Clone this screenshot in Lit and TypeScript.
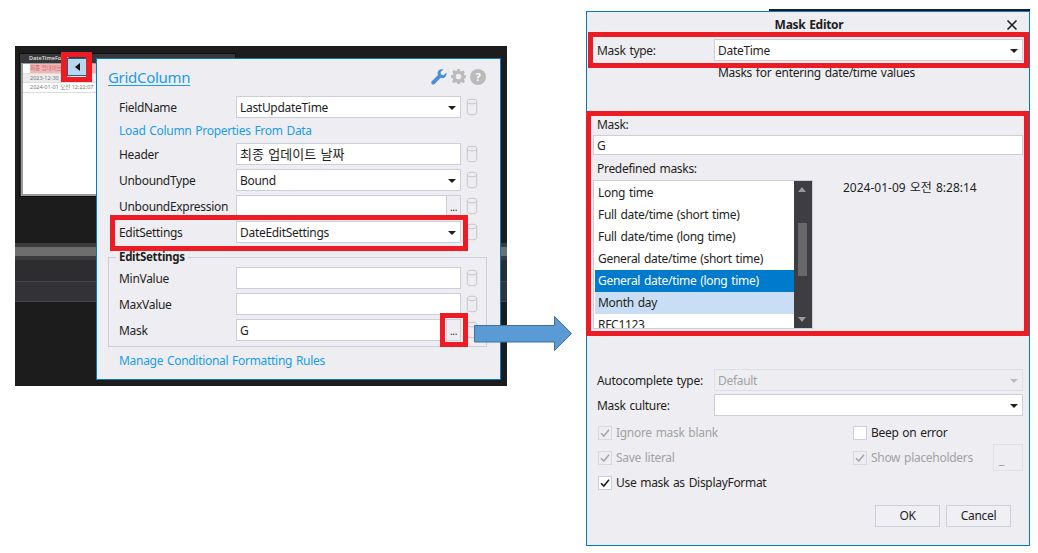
import { LitElement, html, css, svg } from "lit";
import { customElement } from "lit/decorators.js";

const caret = html`<span class="caret"></span>`;
const cyl = svg`<svg class="cyl" width="12" height="18" viewBox="0 0 12 18" fill="none" stroke="#c6c6ca" stroke-width="1"><ellipse cx="6" cy="3.5" rx="4.7" ry="2.3"/><path d="M1.3 3.5V14.5C1.3 16 3.5 16.8 6 16.8S10.7 16 10.7 14.5V3.5"/></svg>`;
const checkMark = (c: string) => svg`<svg width="12" height="12" viewBox="0 0 12 12" fill="none" stroke="${c}" stroke-width="1.6"><path d="M2 6.2 4.8 9 10 2.8"/></svg>`;

@customElement("app-root")
export class AppRoot extends LitElement {
  static styles = css`
    :host { display: block; position: relative; width: 1038px; height: 553px; background: #fff; overflow: hidden;
      font: 12px "Noto Sans", "Noto Sans CJK KR", sans-serif; color: #1e1e1e; letter-spacing: -0.3px; word-spacing: 1px; }
    * { box-sizing: border-box; }

    /* left capture */
    .shot { position: absolute; left: 15px; top: 46px; width: 492px; height: 340px; background: #1c1c1c; }
    .inner { position: absolute; left: 4px; top: 7px; width: 217px; height: 144px; background: #38383b; border: 1px solid #0e0e0e; display: flex; flex-direction: column; }
    .inner-head { height: 9px; font-size: 5.500px; line-height: 9px; color: #ddd; padding-left: 9px; font-weight: 600; letter-spacing: 0; }
    .inner-grid { flex: 1; margin: 0 1px 0 1px; background: #fff; border: 2px solid #9a9a9a; border-top-width: 1px; width: 90px; font-size: 5.500px; color: #777; letter-spacing: 0; word-spacing: 0; }
    .inner-row { height: 9.500px; line-height: 9px; padding-left: 7px; border-bottom: 1px solid #ddd; white-space: nowrap; overflow: hidden; }
    .inner-row.pink { background: linear-gradient(90deg, #fff 7px, #f7b4b4 7px); color: #b06a6a; }
    .inner-row.cur { background: #ececec; }
    .stripes { position: absolute; left: 0; right: 0; top: 197px; display: flex; flex-direction: column; }
    .s1 { height: 4px; background: #3c3c3c; }
    .s2 { height: 9px; background: #6e6e6e; }
    .s3 { height: 4px; background: #3c3c3c; }
    .s4 { height: 22px; background: #2d2d30; border-bottom: 1px solid #454548; }
    .s5 { height: 20px; background: #333337; border-bottom: 1px solid #454548; }

    .collapse { position: absolute; left: 67px; top: 58px; width: 20px; height: 18px; background: #b7d9ef; border: 1px solid #2a5e82; display: flex; align-items: center; justify-content: center; }
    .tri { width: 0; height: 0; border-top: 4px solid transparent; border-bottom: 4px solid transparent; border-right: 5px solid #111; }

    /* property panel */
    .panel { position: absolute; left: 96px; top: 58px; width: 405px; height: 322px; background: #eeeef2; border: 1px solid #0079cb; padding: 0 0 0 11px; display: flex; flex-direction: column; }
    .head { height: 37px; display: flex; align-items: center; padding-right: 14px; }
    .title { font-size: 15px; color: #1a9cf0; text-decoration: underline; text-underline-offset: 2px; padding-bottom: 2px; }
    .tools { margin-left: auto; display: flex; align-items: center; gap: 4px; padding-bottom: 2px; }
    .rows { display: flex; flex-direction: column; gap: 4px; padding-left: 11px; }
    .row { display: grid; grid-template-columns: 117px 225px 16px; align-items: center; height: 22px; }
    .row .cyl { margin-left: 5px; }
    .link { color: #1a9cf0; height: 19px; line-height: 22px; margin: -2px 0 0; }
    .field { height: 22px; background: #fff; border: 1px solid #cccedb; padding: 1px 3px 0; line-height: 19px; display: flex; align-items: center; }
    .field .val { flex: 1; white-space: nowrap; overflow: hidden; }
    .ko { font-size: 13px; letter-spacing: 0; }
    .caret { width: 0; height: 0; border-left: 4.500px solid transparent; border-right: 4.500px solid transparent; border-top: 4.500px solid #1e1e1e; margin-right: 1px; }
    .dots { width: 14px; height: 20px; border-left: 1px solid #cccedb; background: #eeeef2; margin-right: -3px; margin-top: -1px; font-size: 10px; line-height: 22px; text-align: center; }
    .group { position: relative; margin: 10px 14px 0 -11px; width: 379px; height: 90px; border: 1px solid #cccedb; padding: 9px 0 0 10px; display: flex; flex-direction: column; gap: 4px; }
    .legend { position: absolute; left: 7px; top: -9px; background: #eeeef2; padding: 0 3px; font-size: 11.500px; font-weight: 700; line-height: 16px; }
    .manage { color: #1a9cf0; height: 18px; line-height: 20px; }

    /* arrow */
    .arrow { position: absolute; left: 473px; top: 315px; }

    /* dialog */
    .edge { position: absolute; left: 769px; top: 9px; width: 261px; height: 2px; background: #1c1c1c; }
    .dialog { position: absolute; left: 586px; top: 11px; width: 444px; height: 535px; background: #eeeef2; border: 1px solid #0079cb; padding: 0 6px 0 10px; display: flex; flex-direction: column; }
    .dtitle { height: 25px; margin: 0 -6px 2px -10px; padding-left: 2px; display: flex; align-items: center; justify-content: center; font-weight: 700; position: relative; }
    .close { position: absolute; right: 11px; top: 7px; }
    .drow { display: grid; grid-template-columns: 117px 1fr; align-items: center; height: 22px; }
    .desc { margin-left: 121px; height: 22px; line-height: 24px; }
    .dmask { margin-top: 33px; height: 19px; line-height: 18px; }
    .mask-in { margin-left: -4px; height: 20px; background: #fff; border: 1px solid #cccedb; padding-left: 3px; line-height: 20px; }
    .plabel { margin-top: 4px; height: 21px; line-height: 20px; }
    .listwrap { display: flex; align-items: flex-start; margin-left: -4px; height: 149px; }
    .list { width: 220px; height: 149px; border: 1px solid #cccedb; background: #fff; display: flex; overflow: hidden; }
    .items { flex: 1; padding: 1px 0 0 1px; overflow: hidden; }
    .item { height: 22px; line-height: 22px; padding-left: 3px; white-space: nowrap; }
    .item.sel { background: #007acc; color: #fff; }
    .item.hov { background: #c9def5; }
    .sb { width: 18px; background: #3e3e42; position: relative; }
    .up, .dn { position: absolute; left: 4px; width: 0; height: 0; border-left: 4.500px solid transparent; border-right: 4.500px solid transparent; }
    .up { top: 6px; border-bottom: 5px solid #999; }
    .dn { bottom: 6px; border-top: 5px solid #999; }
    .thumb { position: absolute; left: 4px; top: 42px; width: 9px; height: 53px; background: #686868; }
    .sample { margin-left: 30px; line-height: 16px; white-space: nowrap; letter-spacing: 0; }
    .auto { margin-top: 40px; }
    .culture { margin-top: 3px; }
    .dis { background: #eeeef2; border-color: #dedee6; color: #a2a2a2; }
    .dis .caret { border-top-color: #bbb; }
    .checks { margin-top: 4px; display: grid; grid-template-columns: 255px 1fr; grid-auto-rows: 25px; }
    .chk { display: flex; align-items: center; gap: 4px; margin-left: 1px; white-space: nowrap; }
    .chk.off { color: #a2a2a2; }
    .box { width: 14px; height: 14px; background: #fff; border: 1px solid #cccedb; display: flex; align-items: center; justify-content: center; }
    .off .box { background: #eeeef2; border-color: #d8d8e0; }
    .ph { margin-left: auto; width: 30px; height: 27px; border: 1px solid #e0e0e8; color: #999; padding: 8px 0 0 5px; line-height: 14px; }
    .btns { margin-top: 10px; display: flex; justify-content: flex-end; gap: 6px; padding-right: 12px; }
    .btn { width: 65px; height: 22px; border: 1px solid #cccedb; background: #f0f0f4; text-align: center; line-height: 20px; }

    /* callouts */
    .red { position: absolute; border: 5px solid #ed1c24; pointer-events: none; }
    .r1 { left: 61px; top: 52px; width: 31px; height: 30px; border-width: 5px 6px; }
    .r2 { left: 110px; top: 215px; width: 358px; height: 36px; }
    .r3 { left: 440px; top: 313px; width: 28px; height: 34px; }
    .r4 { left: 588px; top: 32px; width: 441px; height: 36px; }
    .r5 { left: 586px; top: 111px; width: 443px; height: 225px; }
  `;

  private row(label: string, value: unknown, kind: "select" | "text" | "dots" = "text") {
    return html`<div class="row"><span>${label}</span>
      <div class="field"><span class="val">${value}</span>${kind === "select" ? caret : kind === "dots" ? html`<span class="dots">...</span>` : ""}</div>
      ${cyl}</div>`;
  }

  render() {
    const items = ["Long time", "Full date/time (short time)", "Full date/time (long time)", "General date/time (short time)"];
    return html`
      <div class="shot">
        <div class="inner">
          <div class="inner-head">DateTimeForm</div>
          <div class="inner-grid">
            <div class="inner-row pink">최종 업데이트</div>
            <div class="inner-row cur">2023-12-30 오전</div>
            <div class="inner-row">2024-01-01 오전 12:22:07</div>
          </div>
        </div>
        <div class="stripes"><div class="s1"></div><div class="s2"></div><div class="s3"></div><div class="s4"></div><div class="s5"></div></div>
      </div>
      <div class="collapse"><span class="tri"></span></div>

      <div class="panel">
        <div class="head">
          <span class="title">GridColumn</span>
          <div class="tools">
            <svg width="16" height="16" viewBox="0 0 16 16"><path fill="#4a8fd6" d="M15.400 3.600 12.600 6.200 10 5.600 9.600 3 12.400.4C10.400-.2 8.200.4 7.200 2 6.400 3.200 6.400 4.800 7 6L.8 12.200C0 13 0 14.200.8 15s2 .8 2.800 0L9.800 8.800c1.400.6 3 .4 4.200-.6 1.200-1.200 1.800-3 1.400-4.600Z"/></svg>
            <svg width="15" height="15" viewBox="0 0 16 16"><path fill="#bbb" fill-rule="evenodd" d="M6.600 0h2.800l.4 2.200 1.200.5L12.900 1.400l2 2-1.300 1.900.5 1.200 2.200.4v2.800l-2.200.4-.5 1.200 1.300 1.900-2 2-1.900-1.300-1.200.5-.4 2.200H6.600l-.4-2.200-1.200-.5-1.900 1.300-2-2 1.300-1.900-.5-1.200L-.1 9.400V6.600l2.200-.4.5-1.200L1.300 3.100l2-2 1.900 1.300 1.200-.5ZM8 5a3 3 0 1 0 0 6 3 3 0 0 0 0-6Z"/></svg>
            <svg width="16" height="16" viewBox="0 0 16 16"><circle cx="8" cy="8" r="8" fill="#bbb"/><text x="8" y="12" text-anchor="middle" font-size="11" font-weight="700" fill="#fff" font-family="Noto Sans">?</text></svg>
          </div>
        </div>
        <div class="rows">
          ${this.row("FieldName", "LastUpdateTime", "select")}
          <div class="link">Load Column Properties From Data</div>
          ${this.row("Header", html`<span class="ko">최종 업데이트 날짜</span>`)}
          ${this.row("UnboundType", "Bound", "select")}
          ${this.row("UnboundExpression", "", "dots")}
          ${this.row("EditSettings", "DateEditSettings", "select")}
          <div class="group">
            <span class="legend">EditSettings</span>
            ${this.row("MinValue", "")}
            ${this.row("MaxValue", "")}
            ${this.row("Mask", "G", "dots")}
          </div>
          <div class="manage">Manage Conditional Formatting Rules</div>
        </div>
      </div>

      <svg class="arrow" width="100" height="37" viewBox="0 0 100 37"><path d="M1.500 10.500H81.500V1.500L98.500 18.500 81.500 35.500V27H1.500Z" fill="#5b9bd5" stroke="#41719c" stroke-width="1"/></svg>

      <div class="edge"></div>
      <div class="dialog">
        <div class="dtitle">Mask Editor
          <svg class="close" width="12" height="12" viewBox="0 0 12 12" stroke="#1e1e1e" stroke-width="1.600"><path d="M1.500 1.500 10.500 10.500M10.500 1.500 1.500 10.500"/></svg>
        </div>
        <div class="drow"><span>Mask type:</span><div class="field"><span class="val">DateTime</span>${caret}</div></div>
        <div class="desc">Masks for entering date/time values</div>
        <div class="dmask">Mask:</div>
        <div class="mask-in">G</div>
        <div class="plabel">Predefined masks:</div>
        <div class="listwrap">
          <div class="list">
            <div class="items">
              ${items.map((t) => html`<div class="item">${t}</div>`)}
              <div class="item sel">General date/time (long time)</div>
              <div class="item hov">Month day</div>
              <div class="item">RFC1123</div>
            </div>
            <div class="sb"><span class="up"></span><span class="thumb"></span><span class="dn"></span></div>
          </div>
          <div class="sample">2024-01-09 오전 8:28:14</div>
        </div>
        <div class="drow auto"><span>Autocomplete type:</span><div class="field dis"><span class="val">Default</span>${caret}</div></div>
        <div class="drow culture"><span>Mask culture:</span><div class="field"><span class="val"></span>${caret}</div></div>
        <div class="checks">
          <div class="chk off"><span class="box">${checkMark("#a8a8a8")}</span>Ignore mask blank</div>
          <div class="chk"><span class="box"></span>Beep on error</div>
          <div class="chk off"><span class="box">${checkMark("#a8a8a8")}</span>Save literal</div>
          <div class="chk off"><span class="box">${checkMark("#a8a8a8")}</span>Show placeholders<span class="ph">_</span></div>
          <div class="chk"><span class="box">${checkMark("#1e1e1e")}</span>Use mask as DisplayFormat</div>
        </div>
        <div class="btns"><div class="btn">OK</div><div class="btn">Cancel</div></div>
      </div>

      <div class="red r1"></div><div class="red r2"></div><div class="red r3"></div><div class="red r4"></div><div class="red r5"></div>
    `;
  }
}
